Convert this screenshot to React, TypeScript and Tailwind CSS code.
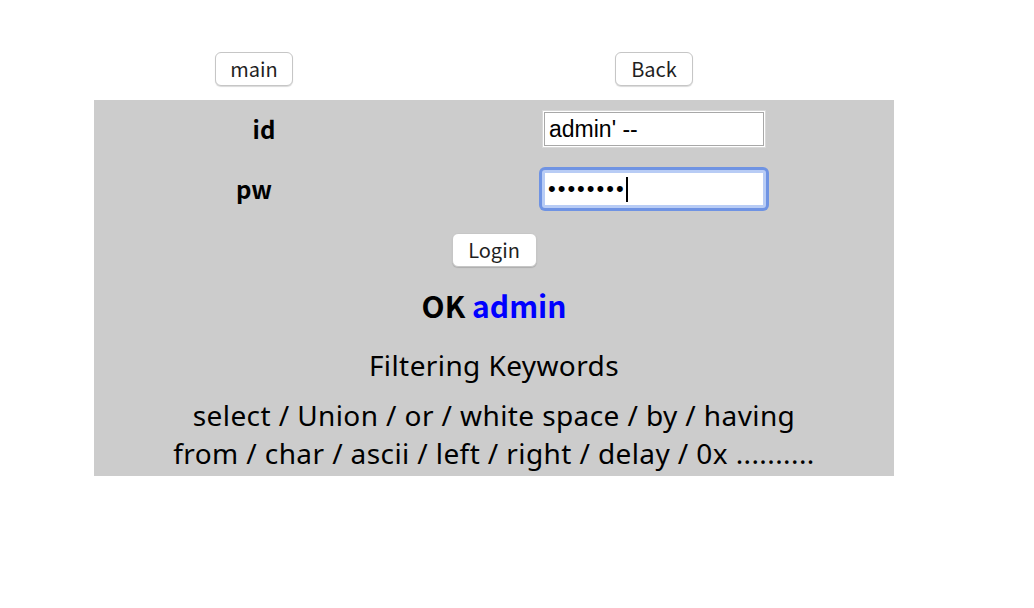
import React from 'react';

const btn =
  'bg-white border border-[#c6c6c6] rounded-[6px] shadow-[0_1px_1px_rgba(0,0,0,0.15)] text-[20px] leading-none text-[#1f1f1f] font-["Noto_Sans_CJK_KR","Noto_Sans",sans-serif]';

const App: React.FC = () => {
  return (
    <div className="w-[1034px] h-[608px] bg-white font-['Noto_Sans_CJK_KR','Noto_Sans',sans-serif] text-black">
      <div className="w-[800px] ml-[94px]">
        {/* top buttons */}
        <div className="grid grid-cols-[320px_480px] pt-[52px] h-[100px]">
          <div className="flex justify-center">
            <button className={`${btn} w-[78px] h-[34px]`}>main</button>
          </div>
          <div className="flex justify-center">
            <button className={`${btn} w-[78px] h-[34px]`}>Back</button>
          </div>
        </div>

        <div className="bg-[#cccccc] pt-[10px] h-[376px]">
          <div className="grid grid-cols-[320px_480px] h-[38px] items-center">
            <div className="text-center pl-[20px] text-[24px] font-bold">id</div>
            <div className="flex justify-center">
              <input
                readOnly
                defaultValue="admin' --"
                className="w-[224px] h-[38px] bg-white border border-[#d8d8d8] shadow-[inset_0_0_0_1px_#ffffff,inset_0_0_0_2px_#a8a8a8] px-[6px] text-[23px] font-['Liberation_Sans',Arial,sans-serif] text-black outline-none"
              />
            </div>
          </div>

          <div className="grid grid-cols-[320px_480px] h-[38px] items-center mt-[22px]">
            <div className="text-center text-[24px] font-bold">pw</div>
            <div className="flex justify-center">
              <div className="w-[224px] h-[38px] bg-white border-[3px] border-[#b8ccf5] shadow-[0_0_0_3px_#6f93e3] rounded-[3px] flex items-center px-[3px] font-['Liberation_Sans',Arial,sans-serif]">
                <span className="text-[22px] tracking-[2px] leading-none">••••••••</span>
                <span className="w-[2px] h-[25px] bg-black" />
              </div>
            </div>
          </div>

          <div className="flex justify-center mt-[25px]">
            <button className={`${btn} w-[85px] h-[34px]`}>Login</button>
          </div>

          <div className="text-center text-[30px] font-bold leading-[40px] mt-[18px]">
            OK <span className="text-[#0000ff]">admin</span>
          </div>

          <div className="font-['Noto_Sans',sans-serif] text-[28px] tracking-[0.4px] leading-[38px] mt-[21px] text-center">
            <div>Filtering Keywords</div>
            <div className="mt-[12px]">
              <div>select / Union / or / white space / by / having</div>
              <div>from / char / ascii / left / right / delay / 0x ..........</div>
            </div>
          </div>
        </div>
      </div>
    </div>
  );
};

export default App;
